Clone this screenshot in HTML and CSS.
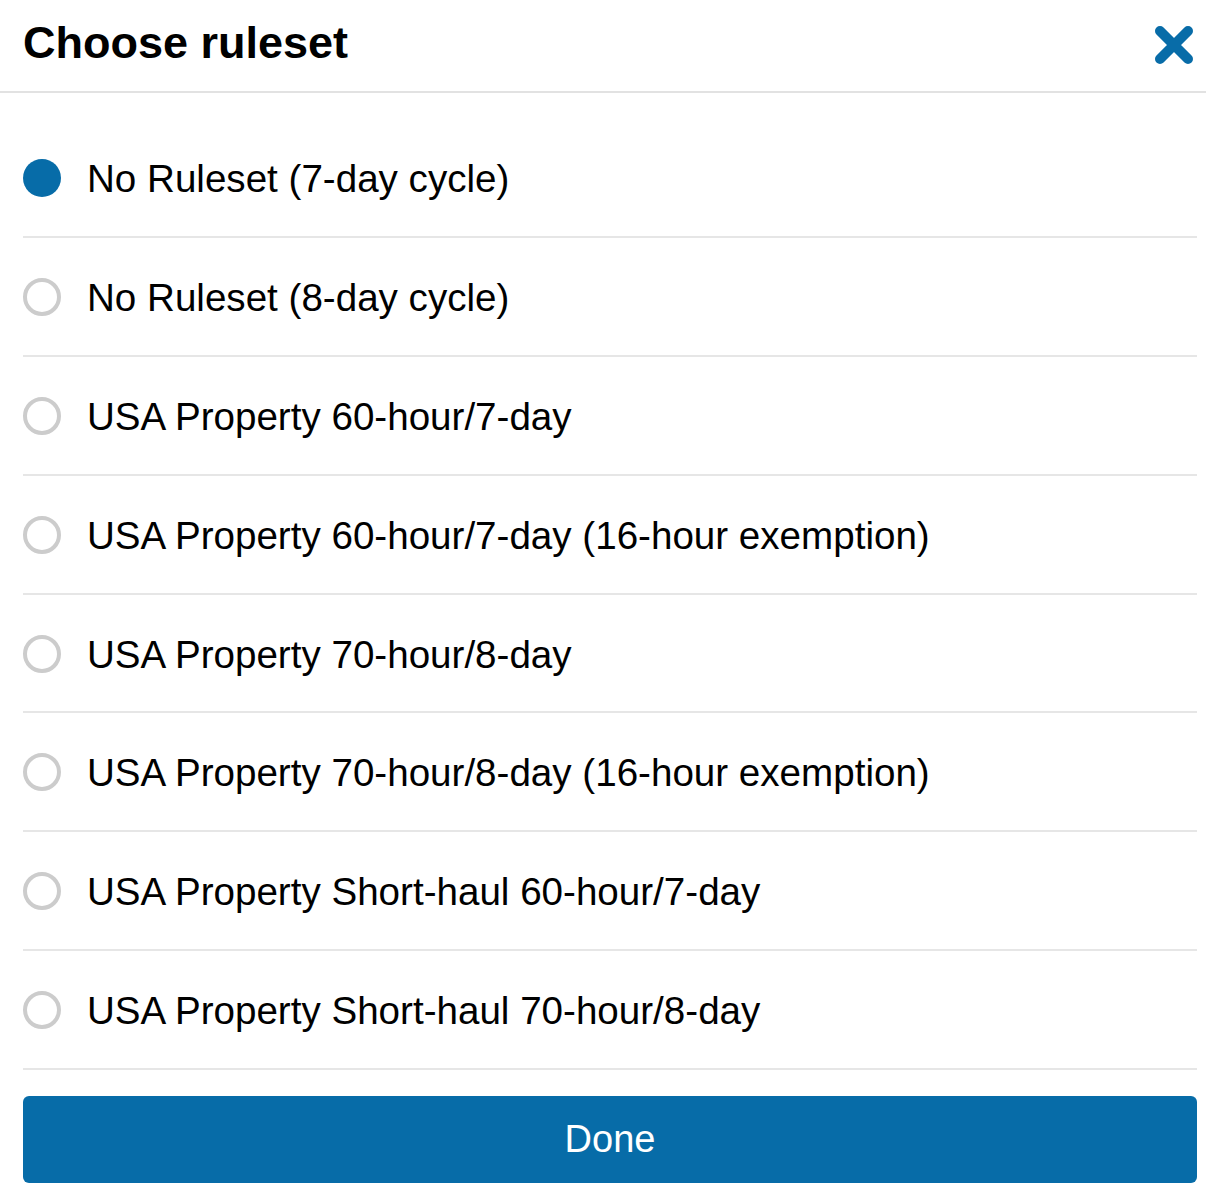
FILE: index.html
```html
<!DOCTYPE html>
<html>
<head>
<meta charset="utf-8">
<link rel="stylesheet" href="styles.css">
</head>
<body>
<div class="dialog">
  <header class="header">
    <h1 class="title">Choose ruleset</h1>
    <button class="close" aria-label="Close">
      <svg width="40" height="38" viewBox="0 0 40 38"><path d="M6 5 L34 33 M34 5 L6 33" stroke="#086ca8" stroke-width="10" stroke-linecap="round" fill="none"/></svg>
    </button>
  </header>
  <ul class="list">
    <li class="row"><span class="radio checked"></span><span class="label">No Ruleset (7-day cycle)</span></li>
    <li class="row"><span class="radio"></span><span class="label">No Ruleset (8-day cycle)</span></li>
    <li class="row"><span class="radio"></span><span class="label">USA Property 60-hour/7-day</span></li>
    <li class="row"><span class="radio"></span><span class="label">USA Property 60-hour/7-day (16-hour exemption)</span></li>
    <li class="row"><span class="radio"></span><span class="label">USA Property 70-hour/8-day</span></li>
    <li class="row"><span class="radio"></span><span class="label">USA Property 70-hour/8-day (16-hour exemption)</span></li>
    <li class="row"><span class="radio"></span><span class="label">USA Property Short-haul 60-hour/7-day</span></li>
    <li class="row"><span class="radio"></span><span class="label">USA Property Short-haul 70-hour/8-day</span></li>
  </ul>
  <div class="footer">
    <button class="done">Done</button>
  </div>
</div>
</body>
</html>
```
FILE: styles.css
```css
html, body {
  margin: 0;
  padding: 0;
  background: #ffffff;
  font-family: "Liberation Sans", Arial, sans-serif;
  color: #000;
}
.dialog {
  width: 1206px;
}
.header {
  height: 93px;
  box-sizing: border-box;
  border-bottom: 2px solid #e2e2e2;
  display: flex;
  align-items: center;
  justify-content: space-between;
  padding: 0 12px 6px 23px;
}
.title {
  margin: 0;
  font-size: 45px;
  line-height: 45px;
  font-weight: bold;
}
.close {
  border: 0;
  background: none;
  padding: 0;
  width: 40px;
  height: 38px;
  display: flex;
  margin-top: 4px;
}
.list {
  list-style: none;
  margin: 0;
  padding: 26px 9px 0 23px;
}
.row {
  height: 118.9px;
  box-sizing: border-box;
  border-bottom: 2px solid #e6e6e6;
  display: flex;
  align-items: center;
  gap: 26px;
  padding-top: 3px;
}
.radio {
  width: 38px;
  height: 38px;
  box-sizing: border-box;
  border-radius: 50%;
  border: 4px solid #cccccc;
  flex: none;
  margin-top: -2px;
}
.radio.checked {
  border: 0;
  background: #076ca8;
}
.label {
  font-size: 38.6px;
  line-height: 44px;
}
.footer {
  padding: 26px 9px 0 23px;
}
.done {
  width: 100%;
  height: 87px;
  border: 0;
  border-radius: 6px;
  background: #076ca8;
  color: #fff;
  font-family: "Liberation Sans", Arial, sans-serif;
  font-size: 38px;
  display: block;
}
```
